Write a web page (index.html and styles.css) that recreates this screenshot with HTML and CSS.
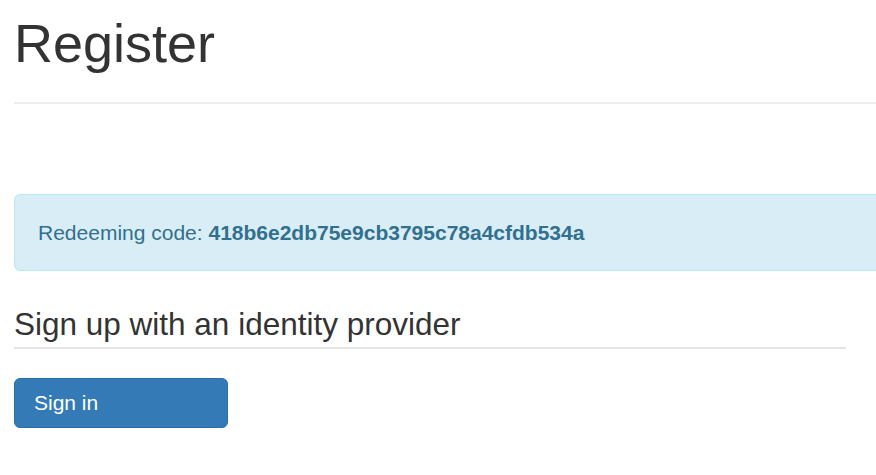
FILE: index.html
```html
<!DOCTYPE html>
<html lang="en">
<head>
<meta charset="utf-8">
<title>Register</title>
<link rel="stylesheet" href="styles.css">
</head>
<body>
<div class="page">
  <h1 class="title">Register</h1>
  <hr class="rule">
  <div class="alert">Redeeming code: <strong>418b6e2db75e9cb3795c78a4cfdb534a</strong></div>
  <div class="provider">
    <fieldset class="fs">
      <legend class="legend">Sign up with an identity provider</legend>
      <button class="btn" type="button">Sign in</button>
    </fieldset>
  </div>
</div>
</body>
</html>
```
FILE: styles.css
```css
html, body {
  margin: 0;
  padding: 0;
  overflow: hidden;
  background: #fff;
}
body {
  font-family: "Liberation Sans", Arial, Helvetica, sans-serif;
  color: #333;
  font-size: 21px;
  line-height: 30px;
}
.page {
  padding-left: 14px;
  width: 900px;
  padding-top: 14px;
}
.title {
  margin: 0 0 15px 0;
  font-size: 54px;
  font-weight: 400;
  line-height: 59px;
  color: #333;
}
.rule {
  margin: 29px 0 0 0;
  border: 0;
  border-top: 2px solid #eee;
  height: 0;
}
.alert {
  margin-top: 90px;
  padding: 23px 23px 22px 23px;
  border: 1px solid #bce8f1;
  border-radius: 6px;
  background: #d9edf7;
  color: #31708f;
  height: 30px;
}
.alert strong {
  font-weight: 700;
}
.provider {
  width: 832px;
  margin-top: 31px;
}
.fs {
  margin: 0;
  padding: 0;
  border: 0;
  min-width: 0;
}
.legend {
  display: block;
  width: 100%;
  padding: 0;
  margin-bottom: 29px;
  font-size: 31.5px;
  line-height: 45px;
  color: #333;
  border-bottom: 2px solid #e5e5e5;
}
.btn {
  display: block;
  width: 214px;
  height: 50px;
  padding: 0 19px;
  text-align: left;
  font-family: "Liberation Sans", Arial, Helvetica, sans-serif;
  font-size: 21px;
  line-height: 30px;
  color: #fff;
  background: #337ab7;
  border: 1px solid #2e6da4;
  border-radius: 6px;
}
```
